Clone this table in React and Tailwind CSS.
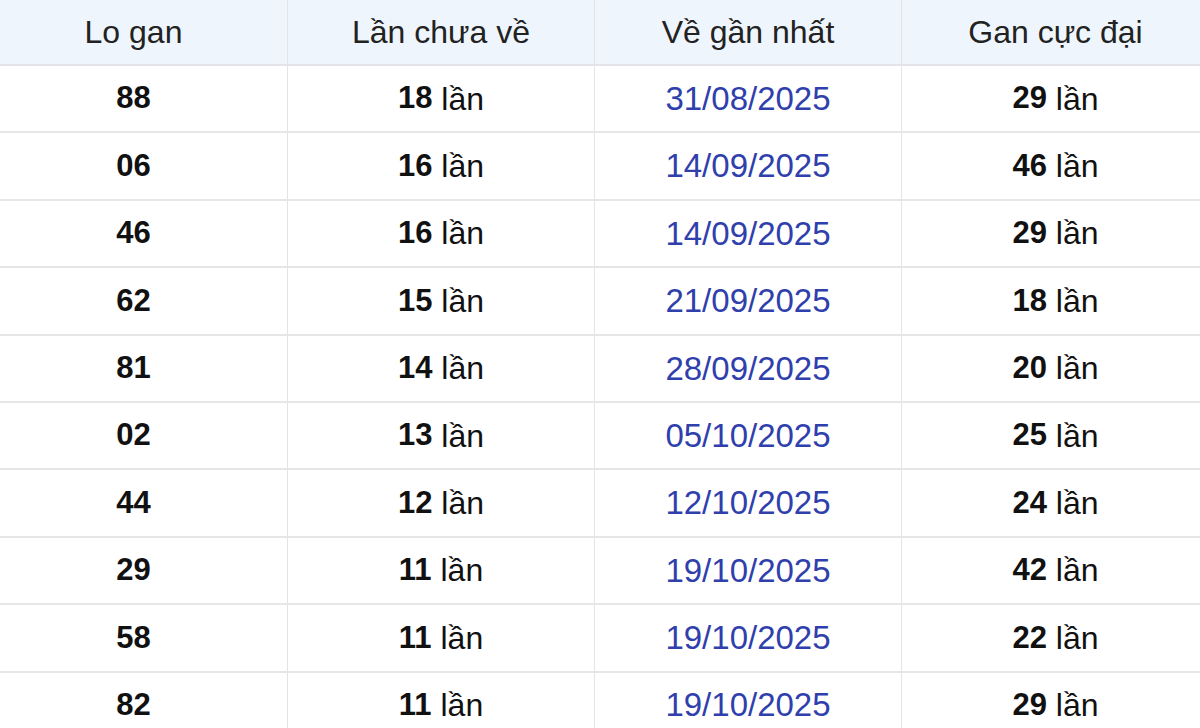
import React from "react";

const rows = [
  ["88", "18", "31/08/2025", "29"],
  ["06", "16", "14/09/2025", "46"],
  ["46", "16", "14/09/2025", "29"],
  ["62", "15", "21/09/2025", "18"],
  ["81", "14", "28/09/2025", "20"],
  ["02", "13", "05/10/2025", "25"],
  ["44", "12", "12/10/2025", "24"],
  ["29", "11", "19/10/2025", "42"],
  ["58", "11", "19/10/2025", "22"],
  ["82", "11", "19/10/2025", "29"],
];

const cols = "grid grid-cols-[308px_307px_307px_307px]";
const cell = "flex items-center justify-center border-r border-[#e4e4e4] last:border-r-0";

const App = () => (
  <div className="w-[1200px] h-[728px] overflow-hidden bg-white">
    <div className="w-[1229px] -ml-[20px] text-[32px] text-[#111] font-['Liberation_Sans',Arial,sans-serif]">
      {/* Header */}
      <div className={`${cols} h-[66px] bg-[#eef5fc] border-b-2 border-[#e2e4e8] text-[#222]`}>
        <div className={cell}>Lo gan</div>
        <div className={cell}>Lần chưa về</div>
        <div className={cell}>Về gần nhất</div>
        <div className={cell}>Gan cực đại</div>
      </div>

      {rows.map(([lo, chua, date, max]) => (
        <div key={lo} className={`${cols} h-[67.4px] border-b-2 border-[#e6e6e6]`}>
          <div className={`${cell} font-bold text-[31px]`}>{lo}</div>
          <div className={cell}>
            <span className="font-bold text-[31px]">{chua}</span>&nbsp;lần
          </div>
          <div className={`${cell} text-[33px] text-[#2f40ad]`}>{date}</div>
          <div className={cell}>
            <span className="font-bold text-[31px]">{max}</span>&nbsp;lần
          </div>
        </div>
      ))}
    </div>
  </div>
);

export default App;
